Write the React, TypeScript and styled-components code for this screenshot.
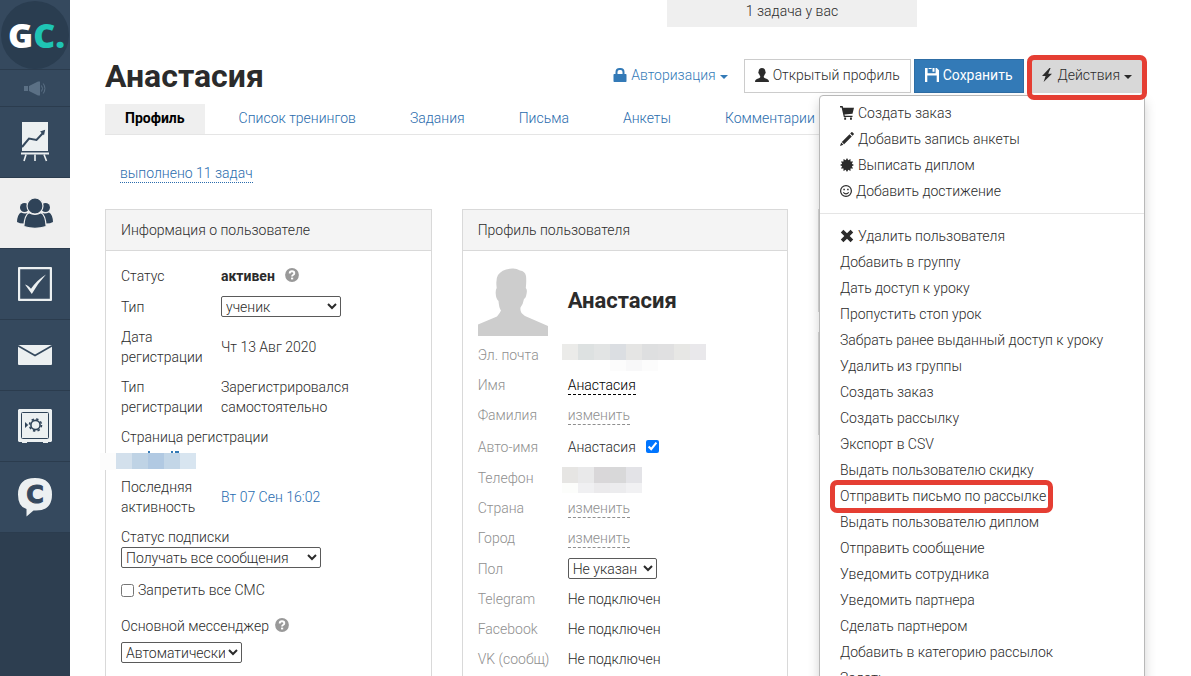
import React from "react";
import styled, { createGlobalStyle, css } from "styled-components";

const GlobalStyle = createGlobalStyle`
  *, *::before, *::after { box-sizing: border-box; }
  body {
    margin: 0;
    background: #fff;
    color: #2b2b2b;
    font-family: Roboto, "Open Sans", sans-serif;
    font-size: 14px;
    font-weight: 300;
    line-height: 20px;
  }
  button, select, input { font: inherit; color: inherit; }
`;

const Shell = styled.div`
  display: flex;
  height: 100vh;
`;

/* ---------- sidebar ---------- */

const Sidebar = styled.nav`
  flex: 0 0 70px;
  display: flex;
  flex-direction: column;
  background: #2d3e50;
`;

const SideLink = styled.a<{ $size?: "logo" | "small"; $active?: boolean }>`
  display: flex;
  align-items: center;
  justify-content: center;
  flex: none;
  height: ${(p) => (p.$size === "logo" ? 70 : p.$size === "small" ? 37 : 71)}px;
  background: ${(p) => (p.$active ? "#efefef" : "#35495e")};
  border-bottom: 1px solid #2b3c4e;
  text-decoration: none;
`;

const LogoDisc = styled.span`
  display: flex;
  align-items: center;
  justify-content: center;
  flex: none;
  width: 68px;
  height: 68px;
  padding-left: 3px;
  border-radius: 50%;
  background: #2a3d50;
  color: #fff;
  font: 800 34px/64px "Open Sans", sans-serif;
`;

const LogoAccent = styled.span`
  color: #1fc4b4;
`;

/* ---------- page ---------- */

const Main = styled.main`
  flex: 1;
  min-width: 0;
  overflow-y: auto;
  scrollbar-width: none;
  padding: 0 46px 0 35px;
`;

const TaskStrip = styled.div`
  display: flex;
  justify-content: flex-end;
  padding-right: 228px;
`;

const TaskNote = styled.div`
  width: 250px;
  height: 27px;
  padding-top: 1px;
  background: #efefef;
  text-align: center;
`;

const TitleBar = styled.header`
  display: flex;
  align-items: center;
  justify-content: space-between;
  margin-top: 32px;
  height: 34px;
`;

const Title = styled.h1`
  margin: 0;
  font-size: 32px;
  font-weight: 700;
  line-height: 34px;
`;

const Toolbar = styled.div`
  display: flex;
  align-items: center;
  gap: 3px;
`;

const Button = styled.button<{ $kind: "link" | "plain" | "primary" | "active" }>`
  display: flex;
  align-items: center;
  gap: 4px;
  height: 34px;
  padding: 0 10px 2px;
  border: 1px solid transparent;
  background: none;
  font-weight: 300;
  white-space: nowrap;
  cursor: pointer;
  ${(p) => p.$kind === "link" && css`color: #337ab7; padding: 0 12px 2px;`}
  ${(p) => p.$kind === "plain" && css`background: #fff; border-color: #ccc;`}
  ${(p) => p.$kind === "primary" && css`background: #337ab7; border-color: #2e6da4; color: #fff; font-weight: 400;`}
  ${(p) => p.$kind === "active" && css`background: #d8d8d8; padding: 0 12px 2px;`}
`;

const Caret = styled.span`
  border: 4px solid transparent;
  border-top-color: currentColor;
  border-bottom: 0;
  margin-top: 4px;
`;

const ActionsBox = styled.div`
  position: relative;
`;

const Ring = styled.span`
  position: absolute;
  z-index: 3;
  inset: -4px -2px -7px 0;
  border: 5px solid #e53e33;
  border-radius: 7px;
  pointer-events: none;
`;

const Menu = styled.ul`
  position: absolute;
  z-index: 2;
  top: 36px;
  right: 0;
  width: 326px;
  margin: 0;
  padding: 4px 0;
  list-style: none;
  background: #fff;
  border: 1px solid #b8b8b8;
  border-radius: 4px;
  box-shadow: 0 6px 12px rgba(0, 0, 0, 0.18);
`;

const MenuItem = styled.li`
  position: relative;
`;

const MenuLink = styled.a`
  display: flex;
  align-items: center;
  gap: 4px;
  height: 26px;
  padding: 0 20px;
  color: #2b2b2b;
  text-decoration: none;
  white-space: nowrap;
`;

const MenuRing = styled(Ring)`
  inset: -3px auto -4px 10px;
  width: 223px;
`;

const Divider = styled.li`
  height: 1px;
  margin: 9px 0;
  background: #e5e5e5;
`;

const Tabs = styled.nav`
  display: flex;
  gap: 14px;
  margin-top: 11px;
  border-bottom: 1px solid #e5e5e5;
`;

const Tab = styled.a<{ $active?: boolean }>`
  height: 30px;
  padding: 4px 20px;
  text-decoration: none;
  white-space: nowrap;
  color: ${(p) => (p.$active ? "#000" : "#2a6cad")};
  background: ${(p) => (p.$active ? "#efefef" : "none")};
  font-weight: ${(p) => (p.$active ? 700 : 300)};
`;

const DoneLine = styled.div`
  margin: 28px 15px 26px;
  line-height: 20px;
`;

const DoneLink = styled.a`
  display: block;
  width: fit-content;
  height: 20px;
  color: #2a6cad;
  text-decoration: none;
  border-bottom: 1px dotted #2a6cad;
`;

/* ---------- panels ---------- */

const Columns = styled.div`
  display: grid;
  grid-template-columns: repeat(3, 1fr);
  gap: 30px;
  align-items: start;
`;

const Stack = styled.div`
  display: grid;
  gap: 20px;
`;

const Panel = styled.section`
  border: 1px solid #d9d9d9;
  min-height: 103px;
`;

const PanelTitle = styled.h2`
  margin: 0;
  padding: 10px 15px;
  min-height: 41px;
  background: #f4f4f4;
  border-bottom: 1px solid #d9d9d9;
  font-size: 14px;
  font-weight: 300;
  line-height: 20px;
`;

const PanelBody = styled.div`
  padding: 10px 15px 20px;
`;

const Row = styled.div<{ $labels: number }>`
  display: grid;
  grid-template-columns: ${(p) => p.$labels}px 1fr;
  align-items: center;
  padding: 5px 0;
`;

const Block = styled.div`
  position: relative;
  padding: 5px 0;
`;

const Label = styled.label<{ $muted?: boolean }>`
  padding-right: 10px;
  color: ${(p) => (p.$muted ? "#8f8f8f" : "inherit")};
  ${(p) => p.$muted && css`padding-right: 0; white-space: nowrap;`}
`;

const Value = styled.div<{ $narrow?: boolean; $tall?: boolean }>`
  position: relative;
  display: flex;
  align-items: center;
  gap: 10px;
  min-height: ${(p) => (p.$tall ? 23 : 20)}px;
  max-width: ${(p) => (p.$narrow ? "150px" : "none")};
`;

const Strong = styled.strong`
  font-weight: 700;
`;

const BlueLink = styled.a`
  color: #1f6bb0;
  text-decoration: none;
`;

const EditLink = styled.a<{ $filled?: boolean }>`
  height: 20px;
  color: ${(p) => (p.$filled ? "#000" : "#8f8f8f")};
  border-bottom: 1px dashed ${(p) => (p.$filled ? "#000" : "#8f8f8f")};
  text-decoration: none;
`;

const Select = styled.select<{ $width: number }>`
  display: block;
  width: ${(p) => p.$width}px;
  height: 21px;
  padding: 0;
  border: 1px solid #5a5a5a;
  border-radius: 2px;
  background: #fff;
  line-height: 19px;
`;

const Check = styled.input`
  width: 13px;
  height: 13px;
  margin: 0;
`;

const CheckLine = styled.div`
  display: flex;
  align-items: center;
  gap: 4px;
  margin: 7px 0 16px;
`;

const HelpLine = styled.div`
  display: flex;
  align-items: center;
  gap: 6px;
  margin-bottom: 6px;
`;

const Hero = styled.div`
  display: flex;
  align-items: center;
  gap: 20px;
  padding: 5px 0 4px;
`;

const HeroName = styled.h3`
  margin: 0;
  font-size: 22px;
  font-weight: 700;
  line-height: 24px;
`;

const MosaicBox = styled.svg<{ $left: number; $top: number }>`
  position: absolute;
  left: ${(p) => p.$left}px;
  top: ${(p) => p.$top}px;
`;

/* ---------- drawings ---------- */

type IconName = "lock" | "user" | "save" | "flash" | "cart" | "pencil" | "badge" | "smile" | "remove" | "help";

const burst = Array.from({ length: 24 }, (_, i) => {
  const a = (i * Math.PI) / 12;
  const r = i % 2 ? 5 : 7;
  return `${(7 + r * Math.sin(a)).toFixed(2)},${(7 - r * Math.cos(a)).toFixed(2)}`;
}).join(" ");

const shapes: Record<IconName, React.ReactNode> = {
  lock: <path fillRule="evenodd" d="M1.200 6h1.300V4A4 4 0 0 1 6.500 0h1A4 4 0 0 1 11.500 4v2h1.300q.7 0 .7.7v6.600q0 .7-.7.7H1.200q-.7 0-.7-.7V6.700q0-.7.700-.7zM4.500 6h5V4a2 2 0 0 0-2-2h-1a2 2 0 0 0-2 2z" />,
  user: <path d="M7 0C9.300 0 10.400 1.500 10.300 3.600c.5.100.5.900.2 1.600-.2.500-.4.700-.6.700-.2 1-.6 1.700-1.100 2.200v1.200c.3.600 1 .9 2 1.300 1.900.7 3.200 1.200 3.200 3.400H0c0-2.200 1.300-2.700 3.200-3.400 1-.4 1.700-.7 2-1.300V8.100C4.700 7.600 4.300 6.900 4.100 5.900c-.2 0-.4-.2-.6-.7-.3-.7-.3-1.500.2-1.600C3.600 1.500 4.700 0 7 0z" />,
  save: <path fillRule="evenodd" d="M0 0h2.600v5.200h8V0h1.200L14 2.200V14h-2.300V7.600H2.300V14H0zM7.500 0h2v3.800h-2zM3.600 0h3v1H3.600z" />,
  flash: <path d="M9.500 0 2 8h3.600L3.600 14 12 5.700H8.200L10.600 0z" />,
  cart: <path d="M0 0h2.600l.6 1.700H14l-1.500 6.100-8 .8.300 1.100h7.700v1.400H3.800L1.600 1.500H0zM4.200 11.600h1.900v2.200H4.200zM10 11.600h1.900v2.200H10z" />,
  pencil: <path d="M11.400.3q.5-.5 1 0l1.300 1.300q.5.500 0 1l-1.200 1.200-2.300-2.300zM9.500 2.200l2.300 2.300-7.700 7.700-2.300-2.300zM1.200 10.600l2.200 2.200L0 14z" />,
  badge: <polygon points={burst} />,
  smile: (
    <g fill="none" stroke="currentColor">
      <circle cx="6" cy="7" r="5.400" strokeWidth="1.200" />
      <path d="M3.300 8.400q2.700 3 5.400 0" strokeWidth="1.100" />
      <path d="M4.100 4.700v1.600M7.900 4.700v1.600" strokeWidth="1.500" />
    </g>
  ),
  remove: <path d="M3.400.8 7 4.300 10.600.8l2.600 2.600L9.700 7l3.500 3.600-2.600 2.600L7 9.700l-3.600 3.500L.8 10.600 4.300 7 .8 3.400z" />,
  help: (
    <g>
      <circle cx="7" cy="7" r="6.900" fill="#999" />
      <path d="M4.700 5.500Q4.700 3.300 7 3.300t2.300 1.900Q9.300 6.300 8 7q-.9.500-.9 1.400" fill="none" stroke="#fff" strokeWidth="1.900" />
      <path d="M6 9.600h2.200v1.800H6z" fill="#fff" />
    </g>
  ),
};

const Icon = ({ name, width = 14 }: { name: IconName; width?: number }) => (
  <svg width={width} height="14" viewBox={`0 0 ${width} 14`} fill="currentColor" aria-hidden="true">
    {shapes[name]}
  </svg>
);

const HelpMark = styled.span`
  display: flex;
  padding-bottom: 3px;
`;

const HelpIcon = () => (
  <HelpMark>
    <Icon name="help" />
  </HelpMark>
);

const Megaphone = () => (
  <svg width="22" height="15" viewBox="0 0 22 15" fill="#5b7085" aria-hidden="true">
    <path d="M0 5h4v5H0zM5 5l9-4.500h2v14h-2L5 10z" />
    <path d="M17.500 4.500q2 3 0 6M19.300 2.500q3.200 5 0 10" fill="none" stroke="#5b7085" />
  </svg>
);

const Easel = () => (
  <svg width="28" height="40" viewBox="0 0 28 40" aria-hidden="true">
    <path d="M1 0h26v29H1zM0 30.500h28v2H0z" fill="#ecf0f1" />
    <path d="M5 32.500 3 39M14 32.500V39M23 32.500 25.500 39" stroke="#ecf0f1" strokeWidth="1.600" />
    <path d="M1 25l7-8.500 7.500 1.500 6.500-7" fill="none" stroke="#35495e" strokeWidth="2" />
    <path d="M19 9.500l5.200-1.800-1.200 5.500z" fill="#35495e" />
  </svg>
);

const People = () => (
  <svg width="36" height="31" viewBox="0 0 36 31" fill="#2f4358" aria-hidden="true">
    <circle cx="7.500" cy="9.500" r="4.500" />
    <circle cx="28.500" cy="9.500" r="4.500" />
    <path d="M0 24q.3-7.500 4-9.500 3.500 1.800 7 .6l-4 10.400Q2.500 25.500 0 24zM36 24q-.3-7.500-4-9.500-3.500 1.800-7 .6l4 10.400q4.500 0 7-1.500z" />
    <g stroke="#efefef" strokeWidth="1.200">
      <circle cx="18" cy="8" r="8" />
      <path d="M6.800 28.500Q7.500 17 12 14.800q6 3.400 12 0 4.500 2.200 5.200 13.700-11.200 3.600-22.400 0z" />
    </g>
  </svg>
);

const CheckBoxArt = () => (
  <svg width="34" height="34" viewBox="0 0 34 34" aria-hidden="true">
    <rect x="1" y="1" width="32" height="32" rx="1" fill="none" stroke="#ecf0f1" strokeWidth="2.400" />
    <path d="M7 17.500q2.500.5 6 4.300Q19 13 28 7.500 20 16 13.800 27z" fill="#ecf0f1" />
  </svg>
);

const Envelope = () => (
  <svg width="34" height="20" viewBox="0 0 34 20" aria-hidden="true">
    <rect width="34" height="20" rx="1" fill="#ecf0f1" />
    <path d="M0 .8 17 10.500 34 .8" fill="none" stroke="#35495e" strokeWidth="1.600" />
  </svg>
);

const Safe = () => (
  <svg width="34" height="34" viewBox="0 0 34 34" aria-hidden="true">
    <path d="M1 0h32l1 1v31l-1 1h-3v1h-5v-1H9v1H4v-1H1l-1-1V1z" fill="#ecf0f1" />
    <rect x="3.500" y="3.500" width="27" height="26" rx="1" fill="none" stroke="#2f4358" />
    <circle cx="17.500" cy="16" r="4.600" fill="none" stroke="#2f4358" strokeWidth="1.600" />
    <circle cx="17.500" cy="16" r="6" fill="none" stroke="#2f4358" strokeWidth="1.600" strokeDasharray="2.400 2.300" />
    <path d="M7 13l3.200 3L7 19z" fill="#2f4358" />
  </svg>
);

const Chat = () => (
  <svg width="34" height="39" viewBox="0 0 34 39" aria-hidden="true">
    <path d="M17 0Q34 0 34 16.500T17 32.500h-1.500L8.500 38.500V31Q0 29 0 16.500 0 0 17 0z" fill="#ecf0f1" />
    <text x="17" y="25" textAnchor="middle" fill="#35495e" stroke="#35495e" strokeWidth="1" fontFamily="DejaVu Sans" fontWeight="700" fontSize="24">
      C
    </text>
  </svg>
);

const Avatar = () => (
  <svg width="70" height="70" viewBox="0 0 70 70" fill="#cdcdcd" role="img" aria-label="Аватар">
    <path d="M34 2.500q4-.5 8 2 5 .5 6 5.500.6 5-.2 12 1.600 1.500.8 5.500-.7 4.500-2.600 5.500-1 5.500-3.500 8.500-.5 3 1 5.500 1.500 1.500 3.500 3L70 60v10H0V58.500l19-8q3-3.500 4-6-2-2.500-2.500-9.500Q18 33 17.700 27.500q-.2-4 1-5.500Q17.500 13 20 9q4-6 14-6.500z" />
  </svg>
);

type Cell = [x: number, y: number, w: number, h: number, fill: string];

const strip = (y: number, h: number, x: number, fills: string[]): Cell[] =>
  fills.map((f, i) => [x + i * 16, y, 16, h, f]);

const Mosaic = ({ left, top, width, height, cells }: { left: number; top: number; width: number; height: number; cells: Cell[] }) => (
  <MosaicBox $left={left} $top={top} width={width} height={height} shapeRendering="crispEdges" aria-hidden="true">
    {cells.map(([x, y, w, h, fill]) => (
      <rect key={`${x}-${y}`} x={x} y={y} width={w} height={h} fill={fill} />
    ))}
  </MosaicBox>
);

const emailCells = [
  ...strip(0, 16, 0, ["#ebebe9", "#dde1e1", "#e2e4e4", "#dbdee2", "#e5e5e4", "#dedfe0", "#e0e0e1", "#e7e7e5", "#e9e8eb"]),
  ...strip(16, 11, 48, ["#fcfcfc", "#f8f8f9", "#fcfcfc"]),
];
const phoneCells = [
  ...strip(0, 16, 0, ["#e6e5e3", "#e9e9ea", "#d9d7d9", "#d8d8d9", "#e3e3e7"]),
  ...strip(16, 10, 0, ["#fcfdfb", "#f0f0f2", "#ebeaec", "#ececee", "#f1f1f3"]),
];
const pageCells: Cell[] = [
  [48, 0, 2, 2, "#337ab7"],
  [71, 0, 2, 2, "#337ab7"],
  [75, 0, 4, 2, "#337ab7"],
  ...strip(2, 17, 0, ["#fcfcfc"]),
  ...strip(2, 16, 16, ["#d3e0ec", "#bfd3e5", "#b1c9e2", "#c3d6e7", "#d8e5f0"]),
];

/* ---------- data ---------- */

const tabs = ["Профиль", "Список тренингов", "Задания", "Письма", "Анкеты", "Комментарии"];

const quickActions: [IconName, string][] = [
  ["cart", "Создать заказ"],
  ["pencil", "Добавить запись анкеты"],
  ["badge", "Выписать диплом"],
  ["smile", "Добавить достижение"],
];

const actions = [
  "Добавить в группу",
  "Дать доступ к уроку",
  "Пропустить стоп урок",
  "Забрать ранее выданный доступ к уроку",
  "Удалить из группы",
  "Создать заказ",
  "Создать рассылку",
  "Экспорт в CSV",
  "Выдать пользователю скидку",
  "Отправить письмо по рассылке",
  "Выдать пользователю диплом",
  "Отправить сообщение",
  "Уведомить сотрудника",
  "Уведомить партнера",
  "Сделать партнером",
  "Добавить в категорию рассылок",
  "Задать",
];

const highlighted = "Отправить письмо по рассылке";

const ActionsMenu = () => (
  <Menu>
    {quickActions.map(([icon, text]) => (
      <MenuItem key={text}>
        <MenuLink href="#">
          <Icon name={icon} width={icon === "smile" ? 12 : 14} />
          {text}
        </MenuLink>
      </MenuItem>
    ))}
    <Divider />
    <MenuItem>
      <MenuLink href="#">
        <Icon name="remove" />
        Удалить пользователя
      </MenuLink>
    </MenuItem>
    {actions.map((text) => (
      <MenuItem key={text}>
        <MenuLink href="#">{text}</MenuLink>
        {text === highlighted && <MenuRing />}
      </MenuItem>
    ))}
  </Menu>
);

const InfoPanel = () => (
  <Panel>
    <PanelTitle>Информация о пользователе</PanelTitle>
    <PanelBody>
      <Row $labels={100}>
        <Label as="span">Статус</Label>
        <Value>
          <Strong>активен</Strong>
          <HelpIcon />
        </Value>
      </Row>
      <Row $labels={100}>
        <Label htmlFor="type">Тип</Label>
        <Select id="type" $width={120}>
          <option>ученик</option>
        </Select>
      </Row>
      <Row $labels={100}>
        <Label as="span">Дата регистрации</Label>
        <Value>Чт 13 Авг 2020</Value>
      </Row>
      <Row $labels={100}>
        <Label as="span">Тип регистрации</Label>
        <Value $narrow>Зарегистрировался самостоятельно</Value>
      </Row>
      <Block>
        Страница регистрации
        <Value>
          <Mosaic left={-21} top={4} width={96} height={19} cells={pageCells} />
        </Value>
      </Block>
      <Row $labels={100}>
        <Label as="span">Последняя активность</Label>
        <Value>
          <BlueLink href="#">Вт 07 Сен 16:02</BlueLink>
        </Value>
      </Row>
      <Block>
        <Label htmlFor="subscription">Статус подписки</Label>
        <Select id="subscription" $width={200}>
          <option>Получать все сообщения</option>
        </Select>
      </Block>
      <CheckLine>
        <Check type="checkbox" id="sms" />
        <label htmlFor="sms">Запретить все СМС</label>
      </CheckLine>
      <HelpLine>
        <label htmlFor="messenger">Основной мессенджер</label>
        <HelpIcon />
      </HelpLine>
      <Select id="messenger" $width={121}>
        <option>Автоматически</option>
      </Select>
    </PanelBody>
  </Panel>
);

type ProfileRowProps = { label: string; htmlFor?: string; tall?: boolean; children: React.ReactNode };

const ProfileRow = ({ label, htmlFor, tall, children }: ProfileRowProps) => (
  <Row $labels={90}>
    <Label $muted as={htmlFor ? "label" : "span"} htmlFor={htmlFor}>
      {label}
    </Label>
    <Value $tall={tall}>{children}</Value>
  </Row>
);

const ProfilePanel = () => (
  <Panel>
    <PanelTitle>Профиль пользователя</PanelTitle>
    <PanelBody>
      <Hero>
        <Avatar />
        <HeroName>Анастасия</HeroName>
      </Hero>
      <ProfileRow label="Эл. почта">
        <Mosaic left={-6} top={-1} width={144} height={27} cells={emailCells} />
      </ProfileRow>
      <ProfileRow label="Имя">
        <EditLink href="#" $filled>
          Анастасия
        </EditLink>
      </ProfileRow>
      <ProfileRow label="Фамилия">
        <EditLink href="#">изменить</EditLink>
      </ProfileRow>
      <ProfileRow label="Авто-имя" htmlFor="autoname" tall>
        Анастасия
        <Check type="checkbox" id="autoname" defaultChecked />
      </ProfileRow>
      <ProfileRow label="Телефон">
        <Mosaic left={-6} top={-1} width={80} height={26} cells={phoneCells} />
      </ProfileRow>
      <ProfileRow label="Страна">
        <EditLink href="#">изменить</EditLink>
      </ProfileRow>
      <ProfileRow label="Город">
        <EditLink href="#">изменить</EditLink>
      </ProfileRow>
      <ProfileRow label="Пол" htmlFor="gender">
        <Select id="gender" $width={89}>
          <option>Не указан</option>
        </Select>
      </ProfileRow>
      {["Telegram", "Facebook", "VK (сообщ)"].map((name) => (
        <ProfileRow key={name} label={name}>
          Не подключен
        </ProfileRow>
      ))}
    </PanelBody>
  </Panel>
);

export default function App() {
  return (
    <>
      <GlobalStyle />
      <Shell>
        <Sidebar>
          <SideLink href="#" $size="logo">
            <LogoDisc>
              G<LogoAccent>C.</LogoAccent>
            </LogoDisc>
          </SideLink>
          <SideLink href="#" $size="small"><Megaphone /></SideLink>
          <SideLink href="#"><Easel /></SideLink>
          <SideLink href="#" $active><People /></SideLink>
          <SideLink href="#"><CheckBoxArt /></SideLink>
          <SideLink href="#"><Envelope /></SideLink>
          <SideLink href="#"><Safe /></SideLink>
          <SideLink href="#"><Chat /></SideLink>
        </Sidebar>
        <Main>
          <TaskStrip>
            <TaskNote>1 задача у вас</TaskNote>
          </TaskStrip>
          <TitleBar>
            <Title>Анастасия</Title>
            <Toolbar>
              <Button $kind="link">
                <Icon name="lock" />
                Авторизация
                <Caret />
              </Button>
              <Button $kind="plain">
                <Icon name="user" />
                Открытый профиль
              </Button>
              <Button $kind="primary">
                <Icon name="save" />
                Сохранить
              </Button>
              <ActionsBox>
                <Button $kind="active">
                  <Icon name="flash" />
                  Действия
                  <Caret />
                </Button>
                <ActionsMenu />
                <Ring />
              </ActionsBox>
            </Toolbar>
          </TitleBar>
          <Tabs>
            {tabs.map((tab, i) => (
              <Tab key={tab} href="#" $active={i === 0}>
                {tab}
              </Tab>
            ))}
          </Tabs>
          <DoneLine>
            <DoneLink href="#">выполнено 11 задач</DoneLink>
          </DoneLine>
          <Columns>
            <InfoPanel />
            <ProfilePanel />
            <Stack>
              <Panel>
                <PanelTitle />
              </Panel>
              <Panel>
                <PanelTitle />
              </Panel>
            </Stack>
          </Columns>
        </Main>
      </Shell>
    </>
  );
}
